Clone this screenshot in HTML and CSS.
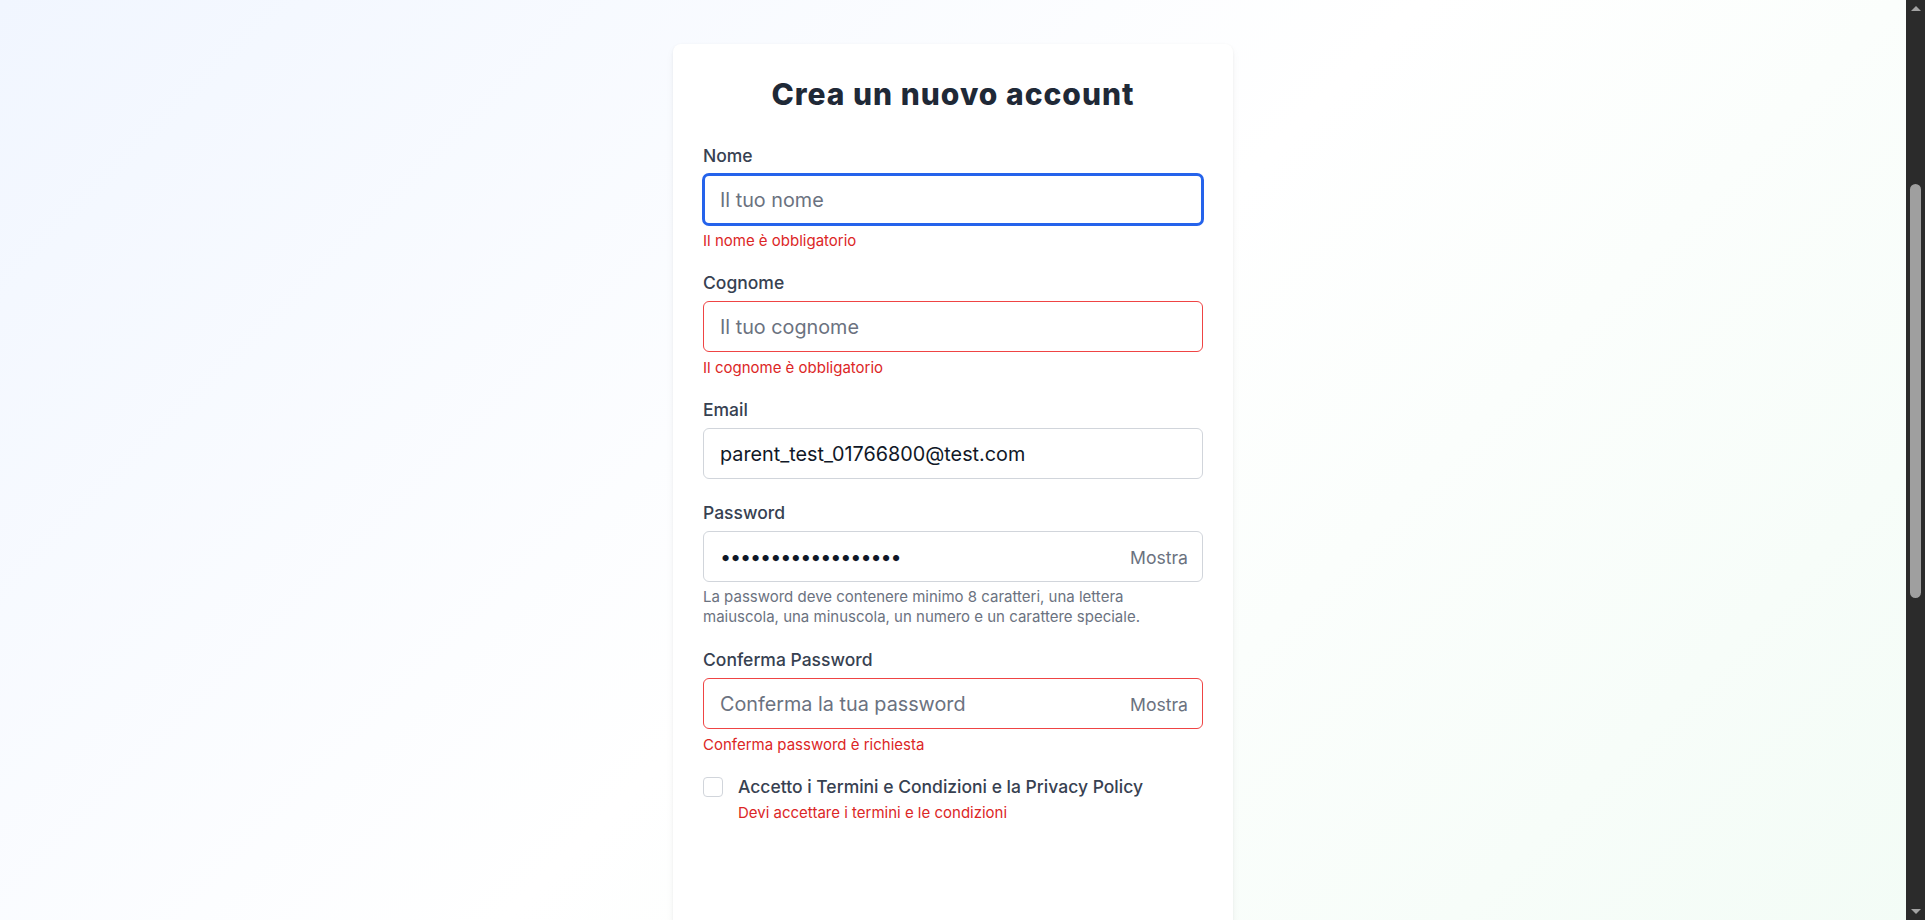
FILE: index.html
```html
<!DOCTYPE html>
<html lang="it">
<head>
<meta charset="utf-8">
<title>Crea un nuovo account</title>
<link rel="stylesheet" href="styles.css">
</head>
<body>
<div class="window">
  <main class="viewport">
    <section class="card">
      <h1 class="title">Crea un nuovo account</h1>
      <form class="form" novalidate>
        <div class="field">
          <label class="label" for="nome">Nome</label>
          <input class="input input-focus" id="nome" type="text" placeholder="Il tuo nome">
          <p class="error">Il nome è obbligatorio</p>
        </div>
        <div class="field">
          <label class="label" for="cognome">Cognome</label>
          <input class="input input-error" id="cognome" type="text" placeholder="Il tuo cognome">
          <p class="error">Il cognome è obbligatorio</p>
        </div>
        <div class="field">
          <label class="label" for="email">Email</label>
          <input class="input" id="email" type="email" value="parent_test_01766800@test.com">
        </div>
        <div class="field">
          <label class="label" for="password">Password</label>
          <div class="input-wrap">
            <input class="input input-pw" id="password" type="password" value="Password123!abcdef">
            <button type="button" class="toggle">Mostra</button>
          </div>
          <p class="hint">La password deve contenere minimo 8 caratteri, una lettera maiuscola, una minuscola, un numero e un carattere speciale.</p>
        </div>
        <div class="field">
          <label class="label" for="conferma">Conferma Password</label>
          <div class="input-wrap">
            <input class="input input-error" id="conferma" type="password" placeholder="Conferma la tua password">
            <button type="button" class="toggle">Mostra</button>
          </div>
          <p class="error">Conferma password è richiesta</p>
        </div>
        <div class="check-row">
          <input class="checkbox" id="terms" type="checkbox">
          <div class="check-text">
            <label class="check-label" for="terms">Accetto i Termini e Condizioni e la Privacy Policy</label>
            <p class="error error-tight">Devi accettare i termini e le condizioni</p>
          </div>
        </div>
      </form>
    </section>
  </main>
  <aside class="scrollbar" aria-hidden="true">
    <div class="sb-btn"><span class="sb-arrow-up"></span></div>
    <div class="sb-track"><div class="sb-thumb"></div></div>
    <div class="sb-btn"><span class="sb-arrow-down"></span></div>
  </aside>
</div>
</body>
</html>
```
FILE: styles.css
```css
* {
  box-sizing: border-box;
}
html, body {
  height: 100%;
}
body {
  margin: 0;
  overflow: hidden;
  font-family: Inter, "Liberation Sans", Arial, sans-serif;
  color: #1f2937;
  background: linear-gradient(135deg, #f1f6ff 0%, #ffffff 50%, #f3fcf6 100%);
}
.window {
  display: flex;
  height: 100vh;
}
.viewport {
  flex: 1;
  overflow: hidden;
  display: flex;
  justify-content: center;
  align-items: flex-start;
  padding-top: 44px;
}
.card {
  flex: none;
  width: 560px;
  min-height: 1000px;
  background: #ffffff;
  border-radius: 8px;
  box-shadow: 0 1px 3px rgba(15, 23, 42, 0.06), 0 4px 10px rgba(15, 23, 42, 0.04);
  padding: 32px 30px 40px;
}
.title {
  margin: 0 0 32px;
  text-align: center;
  font-family: Inter, "Liberation Sans", sans-serif;
  font-weight: 800;
  font-size: 30px;
  line-height: 36px;
  letter-spacing: 1px;
  color: #1f2937;
}
.form {
  display: flex;
  flex-direction: column;
  gap: 22px;
  margin: 0;
}
.field {
  display: flex;
  flex-direction: column;
}
.label {
  display: block;
  font-size: 17.5px;
  line-height: 24px;
  font-weight: 500;
  color: #374151;
  margin-bottom: 6px;
}
.input-wrap {
  position: relative;
}
.input {
  display: block;
  width: 100%;
  height: 51px;
  padding: 0 16px;
  font-family: Inter, "Liberation Sans", sans-serif;
  font-size: 19.8px;
  color: #111827;
  background: #ffffff;
  border: 1px solid #d1d5db;
  border-radius: 6px;
  outline: none;
}
.input::placeholder {
  color: #6b7280;
  opacity: 1;
}
.input-focus {
  border: 2px solid #2563eb;
  padding: 0 15px;
  box-shadow: 0 0 0 1px #2563eb;
}
.input-error {
  border-color: #ef4444;
}
.input-pw {
  padding-right: 80px;
  letter-spacing: -1.1px;
}
.toggle {
  position: absolute;
  right: 15px;
  top: 50%;
  transform: translateY(-50%);
  border: none;
  background: none;
  padding: 0;
  font-family: Inter, "Liberation Sans", sans-serif;
  font-size: 17.6px;
  color: #6b7280;
  cursor: pointer;
}
.error {
  margin: 7px 0 0;
  font-size: 15px;
  line-height: 17px;
  color: #dc2626;
}
.error-tight {
  margin-top: 4px;
  line-height: 20px;
}
.hint {
  margin: 5px 0 0;
  font-size: 15px;
  line-height: 19.5px;
  color: #6b7280;
}
.check-row {
  display: flex;
  align-items: flex-start;
  gap: 15px;
}
.checkbox {
  appearance: none;
  -webkit-appearance: none;
  flex: none;
  width: 20px;
  height: 20px;
  margin: 2px 0 0;
  border: 1px solid #d1d5db;
  border-radius: 4px;
  background: #ffffff;
}
.check-text {
  display: flex;
  flex-direction: column;
}
.check-label {
  font-size: 17.5px;
  line-height: 24px;
  font-weight: 500;
  color: #374151;
}
.scrollbar {
  flex: none;
  width: 19px;
  height: 100vh;
  background: #2b2b2b;
  display: flex;
  flex-direction: column;
  align-items: center;
}
.sb-btn {
  flex: none;
  height: 17px;
  width: 100%;
  display: flex;
  align-items: center;
  justify-content: center;
}
.sb-arrow-up {
  width: 0;
  height: 0;
  border-left: 5px solid transparent;
  border-right: 5px solid transparent;
  border-bottom: 5px solid #a3a3a3;
}
.sb-arrow-down {
  width: 0;
  height: 0;
  border-left: 5px solid transparent;
  border-right: 5px solid transparent;
  border-top: 5px solid #a3a3a3;
}
.sb-track {
  flex: 1;
  width: 100%;
  display: flex;
  justify-content: center;
  padding-top: 167px;
}
.sb-thumb {
  width: 11px;
  height: 414px;
  border-radius: 6px;
  background: #9f9f9f;
}
```
